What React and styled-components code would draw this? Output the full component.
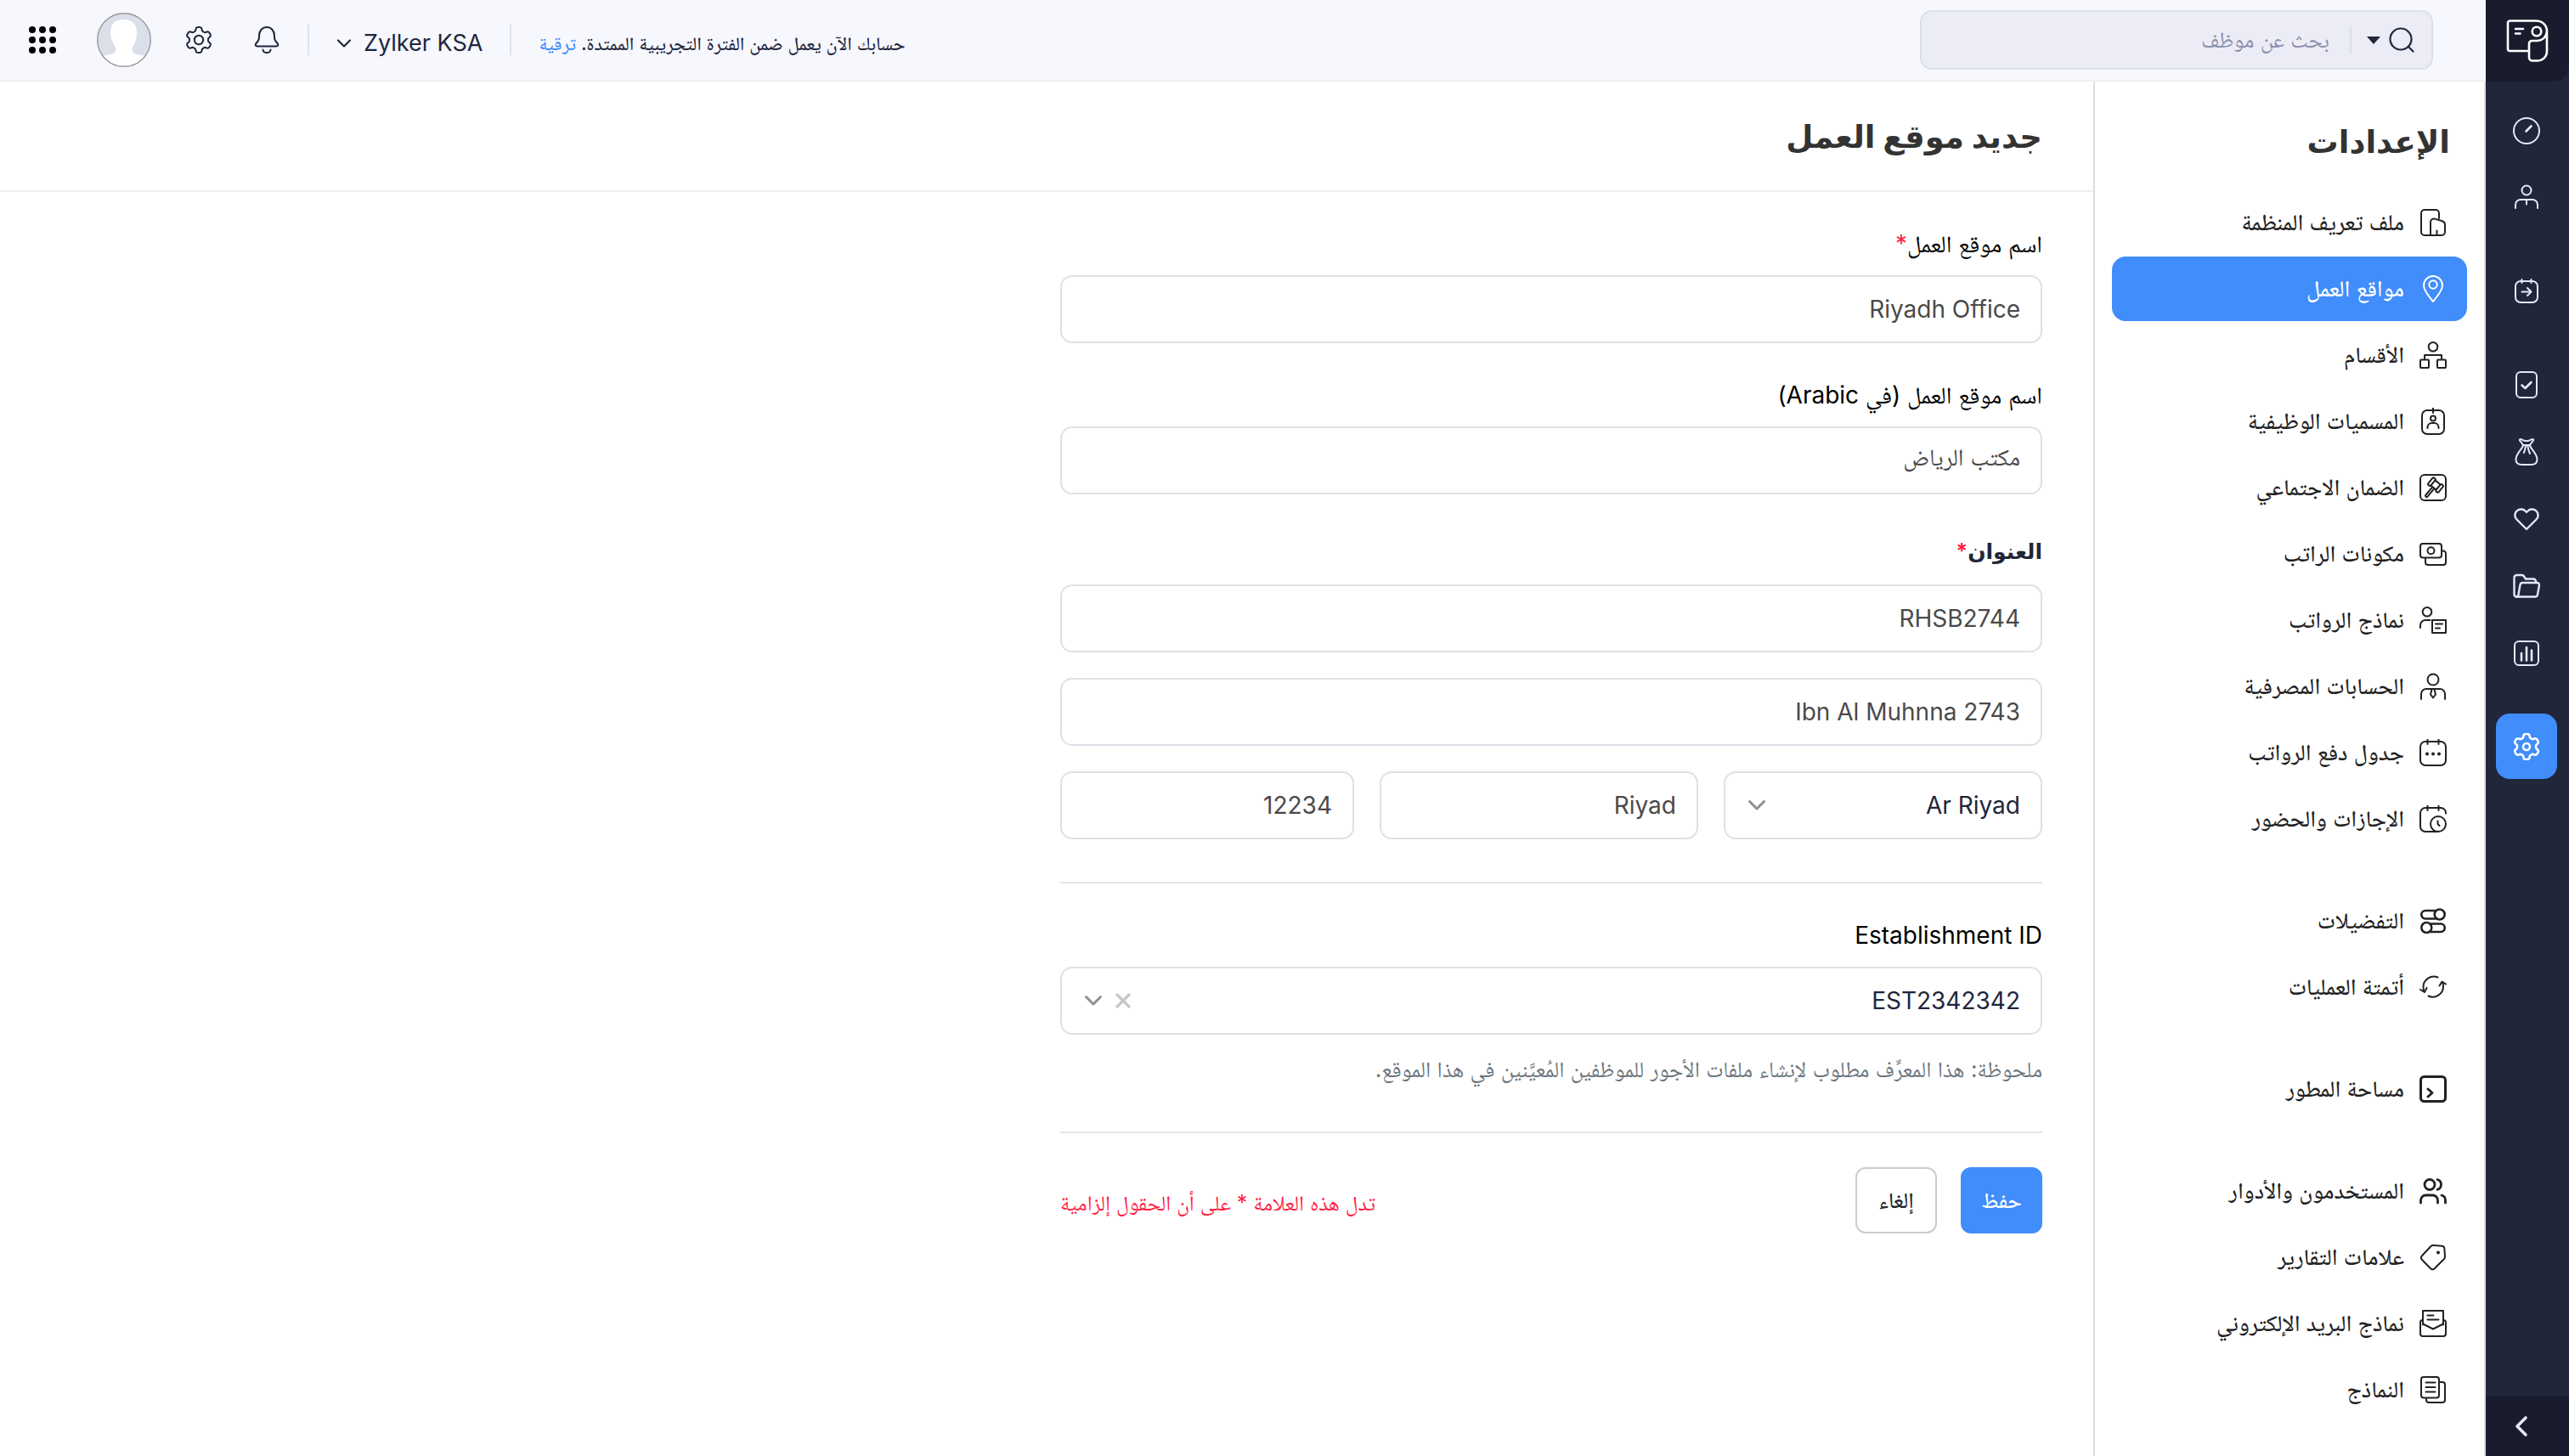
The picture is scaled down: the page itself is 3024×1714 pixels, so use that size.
import React from 'react';
import styled, { createGlobalStyle } from 'styled-components';

const GlobalStyle = createGlobalStyle`
  *, *::before, *::after {
    box-sizing: border-box;
  }

  body {
    margin: 0;
    background: #fff;
    color: #212529;
    font-family: Inter, 'Noto Naskh Arabic', 'DejaVu Sans', sans-serif;
    font-size: 28px;
    line-height: 36px;
  }

  button, input, select {
    font: inherit;
    color: inherit;
    margin: 0;
  }

  a {
    text-decoration: none;
  }
`;

const Page = styled.div`
  display: flex;
  min-height: 100vh;
`;

/* dark icon rail */

const Rail = styled.nav`
  flex: 0 0 98px;
  display: flex;
  flex-direction: column;
  background: #21263a;
`;

const Logo = styled.a`
  display: flex;
  align-items: center;
  justify-content: center;
  height: 96px;
  color: #fff;
  background: #1a1c2e;
  border-bottom-right-radius: 18px;
`;

const RailList = styled.div`
  flex: 1;
  display: flex;
  flex-direction: column;
  align-items: center;
  gap: 2px;
  padding: 19px 2px 0 0;
`;

const RailItem = styled.a`
  display: flex;
  align-items: center;
  justify-content: center;
  width: 72px;
  height: 77px;
  margin-top: ${p => (p.$first ? '31px' : '0')};
  border-radius: 16px;
  color: ${p => (p.$active ? '#fff' : '#e3e9fb')};
  background: ${p => (p.$active ? '#408dfb' : 'transparent')};
`;

const Collapse = styled.button`
  display: flex;
  align-items: center;
  justify-content: center;
  height: 70px;
  padding: 0 14px 0 0;
  border: 0;
  color: #e3e9fb;
  background: #1a1c2e;
`;

/* top bar */

const Shell = styled.div`
  flex: 1;
  min-width: 0;
  display: flex;
  flex-direction: column;
`;

const TopBar = styled.header`
  display: flex;
  align-items: center;
  justify-content: space-between;
  height: 96px;
  padding: 0 62px 0 34px;
  background: #f7f7fe;
  border-bottom: 2px solid #efeff4;
  color: #21263c;
`;

const Search = styled.div`
  display: flex;
  align-items: center;
  width: 604px;
  height: 70px;
  padding: 0 20px;
  border: 2px solid #dcdfea;
  border-radius: 14px;
  background: #ececf7;
`;

const SearchScope = styled.button`
  display: flex;
  align-items: center;
  gap: 10px;
  height: 34px;
  padding: 0 0 0 18px;
  border: 0;
  border-left: 2px solid #dddfe8;
  background: none;
`;

const SearchInput = styled.input`
  flex: 1;
  min-width: 0;
  padding: 0 24px 0 0;
  border: 0;
  outline: 0;
  background: none;
  font-size: 26px;

  &::placeholder {
    color: #8c90ad;
    opacity: 1;
  }
`;

const TopActions = styled.div`
  display: flex;
  align-items: center;
`;

const Trial = styled.p`
  margin: 0;
  padding-top: 8px;
  font-size: 22px;
  font-weight: 500;

  a {
    color: #408dfb;
  }
`;

const Separator = styled.span`
  width: 2px;
  height: 36px;
  margin: 0 32px;
  background: #dfe1ea;
`;

const OrgButton = styled.button`
  display: flex;
  align-items: center;
  gap: 14px;
  padding: 8px 0 0;
  border: 0;
  background: none;
  font-size: 27px;
`;

const IconButton = styled.button`
  display: flex;
  padding: 0;
  border: 0;
  background: none;
  color: ${p => p.$color || 'inherit'};
`;

const IconGroup = styled.div`
  display: flex;
  align-items: center;
  gap: 48px;
`;

const Tools = styled(IconGroup)`
  margin-left: 40px;
`;

/* settings menu */

const Body = styled.div`
  flex: 1;
  display: flex;
`;

const Menu = styled.aside`
  flex: 0 0 462px;
  padding: 41px 20px 24px;
  border: solid #dcdcdc;
  border-width: 0 2px;
`;

const MenuTitle = styled.h2`
  margin: 0 20px 27px;
  color: #333;
  font-family: Inter, 'DejaVu Sans', sans-serif;
  font-size: 37px;
  line-height: 60px;
`;

const MenuGroup = styled.ul`
  display: flex;
  flex-direction: column;
  gap: 2px;
  margin: 0 0 44px;
  padding: 0;
  list-style: none;

  &:last-child {
    margin-bottom: 0;
  }
`;

const MenuLink = styled.a`
  display: flex;
  align-items: center;
  gap: 18px;
  height: 76px;
  padding: 0 24px;
  border-radius: 16px;
  font-size: 27px;
  font-weight: 500;
  color: ${p => (p.$active ? '#fff' : '#222')};
  background: ${p => (p.$active ? '#408dfb' : 'transparent')};
`;

/* form */

const Main = styled.main`
  flex: 1;
  min-width: 0;
`;

const PageHead = styled.div`
  display: flex;
  align-items: center;
  height: 130px;
  padding: 2px 60px 0;
  border-bottom: 2px solid #ededed;
`;

const PageTitle = styled.h1`
  margin: 0;
  color: #333;
  font-family: Inter, 'DejaVu Sans', sans-serif;
  font-size: 37px;
  line-height: 60px;
`;

const Form = styled.form`
  max-width: 1276px;
  padding: 43px 60px;
`;

const Field = styled.div`
  display: flex;
  flex-direction: column;
  gap: 19px;
  margin-bottom: 43px;
`;

const Label = styled.label`
  color: #000;
`;

const Star = styled.span`
  color: #ff1f44;
`;

const Address = styled.fieldset`
  display: flex;
  flex-direction: column;
  gap: 30px;
  margin: 49px 0 0;
  padding: 0;
  border: 0;
`;

const Legend = styled.legend`
  margin-bottom: 21px;
  padding: 0;
  color: #222638;
  font-family: Inter, 'DejaVu Sans', sans-serif;
  font-size: 25px;
  font-weight: 700;
`;

const Input = styled.input`
  width: 100%;
  height: 80px;
  padding: 0 24px;
  border: 2px solid #dee1e7;
  border-radius: 14px;
  outline: 0;
  background: #fff;
  color: #4a4a4a;
`;

const AddressRow = styled.div`
  display: grid;
  grid-template-columns: 375fr 375fr 346fr;
  gap: 30px;
`;

const SelectBox = styled.div`
  position: relative;
`;

const Select = styled.select`
  display: block;
  width: 100%;
  height: 80px;
  padding: 0 24px;
  appearance: none;
  border: 2px solid #dee1e7;
  border-radius: 14px;
  outline: 0;
  background: #fff;
  color: #21263c;
`;

const SelectTools = styled.div`
  position: absolute;
  top: 0;
  bottom: 0;
  left: 28px;
  display: flex;
  align-items: center;
  gap: 14px;
  color: #8f8f8f;
`;

const Rule = styled.hr`
  height: 2px;
  margin: ${p => p.$space};
  border: 0;
  background: #e4e4e7;
`;

const Note = styled.p`
  margin: 4px 0 0;
  color: #6c757d;
  font-size: 26px;
`;

const Footer = styled.div`
  display: flex;
  align-items: center;
  gap: 28px;
`;

const Button = styled.button`
  height: 78px;
  min-width: 96px;
  padding: 0 19px;
  border: 2px solid ${p => (p.$primary ? '#408dfb' : '#ccc')};
  border-radius: 12px;
  background: ${p => (p.$primary ? '#408dfb' : '#fff')};
  color: ${p => (p.$primary ? '#fff' : '#212529')};
  font-size: 26px;
  font-weight: 500;
`;

const Mandatory = styled.p`
  margin: 0 auto 0 0;
  padding-top: 6px;
  color: #ff1f44;
  font-size: 25px;
`;

/* icons */

const gearPath = (cx, cy, outer, inner) => {
  const points = [];
  for (let i = 0; i < 120; i++) {
    const a = (i / 120) * Math.PI * 2;
    const wave = Math.tanh(2.2 * (Math.cos(6 * a) + 0.1)) / Math.tanh(2.42);
    const r = (outer + inner) / 2 + ((outer - inner) / 2) * wave;
    points.push(`${(cx + r * Math.sin(a)).toFixed(2)} ${(cy - r * Math.cos(a)).toFixed(2)}`);
  }
  return `M${points.join('L')}Z`;
};

const Icon = ({ width = 32, height = 32, box = '0 0 32 32', stroke = 2, children }) => (
  <svg width={width} height={height} viewBox={box} fill="none" stroke="currentColor" strokeWidth={stroke} strokeLinecap="round" strokeLinejoin="round" aria-hidden="true">
    {children}
  </svg>
);

const Gear = ({ stroke, hole }) => (
  <Icon stroke={stroke}>
    <path d={gearPath(16, 16, 15, 11)} />
    <circle cx="16" cy="16" r={hole} />
  </Icon>
);

const Chevron = () => (
  <Icon width={22} height={14} box="0 0 22 14" stroke={3}>
    <path d="M2.5 2.5L11 11l8.5-8.5" />
  </Icon>
);

const icons = {
  profile: (
    <Icon>
      <path d="M23 11V5a4 4 0 0 0-4-4H6a4 4 0 0 0-4 4v22a4 4 0 0 0 4 4h20a4 4 0 0 0 4-4V18.500a4.500 4.500 0 0 0-3.200-4.300l-8.600-2.600A4 4 0 0 0 13 15.500V31M20.500 25.500V31" />
    </Icon>
  ),
  pin: (
    <Icon>
      <path d="M16 31C12.500 26.500 5 18.500 5 12a11 11 0 0 1 22 0c0 6.500-7.500 14.500-11 19z" />
      <circle cx="16" cy="11" r="4.700" />
    </Icon>
  ),
  departments: (
    <Icon>
      <circle cx="16" cy="6.300" r="5.300" />
      <path d="M6 21v-5h20v5" />
      <rect x="1" y="21.500" width="10" height="9.500" rx="1" />
      <rect x="21" y="21.500" width="10" height="9.500" rx="1" />
    </Icon>
  ),
  badge: (
    <Icon>
      <rect x="3" y="3" width="26" height="28" rx="6" />
      <path d="M16 0v6M9.500 24v-1a5 5 0 0 1 5-5h3a5 5 0 0 1 5 5v1" />
      <circle cx="16" cy="12.500" r="3" />
    </Icon>
  ),
  gavel: (
    <Icon>
      <rect x="1" y="1" width="30" height="30" rx="5" />
      <g transform="translate(19 13) rotate(40)">
        <rect x="-8" y="-5.500" width="4" height="11" rx="2" />
        <rect x="4" y="-5.500" width="4" height="11" rx="2" />
        <path d="M-4-4h8M-4 4h8M-1.400 4v12.500a1.400 1.400 0 0 0 2.800 0V4" />
      </g>
    </Icon>
  ),
  money: (
    <Icon>
      <rect x="1" y="4" width="25" height="16.500" rx="3" />
      <circle cx="13.500" cy="12.300" r="4" />
      <path d="M26 12.500h2a3 3 0 0 1 3 3V26a3 3 0 0 1-3 3H10a3 3 0 0 1-3-3v-5" />
    </Icon>
  ),
  payslip: (
    <Icon>
      <circle cx="9" cy="6.300" r="5.300" />
      <path d="M1 25v-3a6 6 0 0 1 6-6h5.500M19 20.500h8M19 25.500h5" />
      <rect x="15" y="16" width="16" height="15" />
    </Icon>
  ),
  account: (
    <Icon>
      <circle cx="16" cy="8" r="6.500" />
      <path d="M2 31v-6a6 6 0 0 1 6-6h16a6 6 0 0 1 6 6v6M14.500 19.500l-1.500 6 3 4 3-4-1.500-6" />
    </Icon>
  ),
  schedule: (
    <Icon>
      <rect x="1" y="3" width="30" height="28" rx="6" />
      <path d="M9.500 0v6M22.500 0v6" />
      <g fill="currentColor" stroke="none">
        <circle cx="9" cy="17.500" r="2" />
        <circle cx="16" cy="17.500" r="2" />
        <circle cx="23" cy="17.500" r="2" />
      </g>
    </Icon>
  ),
  leave: (
    <Icon>
      <path d="M31 9.500a6 6 0 0 0-6-6.500H7a6 6 0 0 0-6 6v16a6 6 0 0 0 6 6h15M9.500 0v6M22.500 0v6M21.500 18.500v3.500l2 2" />
      <circle cx="22" cy="22" r="9" />
    </Icon>
  ),
  preferences: (
    <Icon stroke={2.6}>
      <circle cx="23.700" cy="8.500" r="6" />
      <circle cx="8.300" cy="24" r="6" />
      <path d="M19 4H7a4.500 4.500 0 0 0 0 9.500h12M13.500 19.500H25a4.500 4.500 0 0 1 0 9.500H13" />
    </Icon>
  ),
  automation: (
    <Icon>
      <path d="M21.500 4.500C13.500 1.500 4 7 4.500 16.500c0 1.500.300 3 .800 4.500M10.500 26.500c8 3.500 17.500-2 17.500-11.500 0-1.500-.300-3-1-4.500" />
      <path d="M1 19l5 3 2.500-5M31 12.500L26.500 9.500 23.500 14.500" />
    </Icon>
  ),
  developer: (
    <Icon stroke={3}>
      <rect x="1.500" y="1.500" width="29" height="29" rx="4" />
      <path d="M10 16l5 4.500-5 4.500" />
    </Icon>
  ),
  users: (
    <Icon stroke={2.8}>
      <circle cx="12" cy="8.500" r="6" />
      <path d="M1.500 30v-3a6 6 0 0 1 6-6h8a6 6 0 0 1 6 6v3M21 2.700a6 6 0 0 1 0 11.600M26 21.200a6 6 0 0 1 4.500 5.800v3" />
    </Icon>
  ),
  tag: (
    <Icon>
      <path d="M13.200 3.200 3 14.300a3.500 3.500 0 0 0 0 4.700L13 29.300a3.500 3.500 0 0 0 4.800 0l11-11A4.500 4.500 0 0 0 30 15l-.600-9A3.500 3.500 0 0 0 26 2.700L16.500 2a4.500 4.500 0 0 0-3.300 1.200z" />
      <circle cx="22" cy="10.500" r="1" fill="currentColor" />
    </Icon>
  ),
  mail: (
    <Icon>
      <path d="M4 17.500V1h24v16.500M9.500 6.500h7M9.500 11.500h13" />
      <path d="M4 12H3.500A2.500 2.500 0 0 0 1 14.500V28a3 3 0 0 0 3 3h24a3 3 0 0 0 3-3V14.500a2.500 2.500 0 0 0-2.500-2.500H28M4 16.500l12 6 12-6" />
    </Icon>
  ),
  forms: (
    <Icon>
      <rect x="2" y="1" width="21" height="24.500" rx="3" />
      <path d="M23.500 7H27a3 3 0 0 1 3 3v18a3 3 0 0 1-3 3H11a3 3 0 0 1-3-3v-2M7.500 7.500h11M7.500 13h11M7.500 18.500h11" />
    </Icon>
  ),
  dashboard: (
    <Icon>
      <circle cx="16" cy="16" r="15" />
      <path d="M15.500 16.500l6-6" strokeWidth="2.600" />
    </Icon>
  ),
  employee: (
    <Icon>
      <circle cx="16" cy="7" r="5.500" />
      <path d="M3 28v-4a6 6 0 0 1 6-6h14a6 6 0 0 1 6 6v4M16 18v5.500" />
    </Icon>
  ),
  approvals: (
    <Icon>
      <rect x="3" y="4" width="26" height="25" rx="6" />
      <path d="M10.500 2v4M21.500 2v4M10.500 16.500h10.500M17 12l4.500 4.500L17 21" />
    </Icon>
  ),
  check: (
    <Icon>
      <rect x="4" y="1" width="24" height="30" rx="5" />
      <path d="M10.500 16.500l4 3.500 7-7" strokeWidth="2.600" />
    </Icon>
  ),
  bag: (
    <Icon>
      <path d="M12.500 8C9 15 3.500 18 3.500 25c0 4 2.500 6 7 6h11c4.500 0 7-2 7-6 0-7-5.500-10-9-17" />
      <path d="M11.500 8h9M11.500 7L8 2.500c-.500-1 .500-1.800 1.500-1.400 2.500 1.200 4.500 2.100 6.500 2.100s4-.900 6.500-2.100c1-.400 2 .400 1.500 1.400L20.500 7M15 9.500c-.500 3-1 5-2.200 7.500M17.500 9.500c.500 3 1.300 6 2.500 8.500" />
    </Icon>
  ),
  heart: (
    <Icon stroke={2.4}>
      <path d="M16 28L4.500 16.500a7 7 0 0 1-.500-9.500c3-3.300 8-3.300 10.500-.500L16 8l1.500-1.500c2.500-2.800 7.500-2.800 10.500.500a7 7 0 0 1-.500 9.500z" />
    </Icon>
  ),
  folder: (
    <Icon stroke={2.4}>
      <path d="M4 28.500a3 3 0 0 1-2.500-3V6a3 3 0 0 1 3-3h6a3 3 0 0 1 2.200 1L15 7.500h9a3 3 0 0 1 3 3V12" />
      <path d="M4.500 28.500h21.500a3 3 0 0 0 2.900-2.300L31 15a2.500 2.500 0 0 0-2.500-3H11.500a3 3 0 0 0-3 2.500L6.500 26a2.500 2.500 0 0 1-2.500 2.500" />
    </Icon>
  ),
  reports: (
    <Icon>
      <rect x="2" y="2" width="28" height="28" rx="5" />
      <path d="M10 16v8.500M16 9v15.500M22 12.500v12" strokeWidth="2.600" />
    </Icon>
  ),
  settings: <Gear stroke={2.6} hole={4} />,
};

const PayrollLogo = () => (
  <Icon width={50} height={50} box="0 0 50 50" stroke={2.6}>
    <path d="M26 37H4.500A2.500 2.500 0 0 1 2 34.500V4a2.500 2.500 0 0 1 2.500-2.500H35C43 1.500 48 7 48 13.500V37c0 7-5 11.500-11.500 11.500H31a4 4 0 0 1-4-4V28.500a3.500 3.500 0 0 1 3.500-3.500H36c7 0 12-5 12-11.500" />
    <circle cx="36" cy="14" r="5.300" />
    <path d="M11 11h9M11 16.500h5.500" />
  </Icon>
);

const Bell = () => (
  <Icon>
    <path d="M7 11C7 5 11 1 16 1s9 4 9 10v2c0 3.500 1.500 5 3.300 6.800 1.800 1.900 1 3.700-1.300 3.700H5c-2.300 0-3.100-1.800-1.300-3.700C5.500 18 7 16.500 7 13zM11.500 27.500c.500 4.700 8.500 4.700 9 0" />
  </Icon>
);

const Avatar = () => (
  <svg width="64" height="64" viewBox="0 0 64 64" aria-hidden="true">
    <defs>
      <clipPath id="avatar-clip"><circle cx="32" cy="32" r="31" /></clipPath>
    </defs>
    <g clipPath="url(#avatar-clip)">
      <rect width="64" height="64" fill="#dadfea" />
      <path fill="#fff" d="M32 8c9 0 15 5 15 15 0 5-.500 9-2 12-1.500 4-3.500 6-3.500 8 0 4 3 6 8 6.500 5 .500 8 2 10 5V64H4V54c2-3 5-3.500 9-4.500 5-.500 8-2 9-5 .500-3-1-5-2.500-8.500-2-3-3.500-8-3.500-13C16 13 22 8 32 8z" />
    </g>
    <circle cx="32" cy="32" r="31.300" fill="none" stroke="#999" strokeWidth="1.400" />
  </svg>
);

const AppsGrid = () => (
  <svg width="32" height="32" viewBox="0 0 32 32" aria-hidden="true">
    {[4, 16, 28].map(y => [4, 16, 28].map(x => <circle key={`${x}-${y}`} cx={x} cy={y} r="4" />))}
  </svg>
);

const railItems = [
  { icon: 'dashboard', label: 'لوحة المعلومات' },
  { icon: 'employee', label: 'الموظفون' },
  { icon: 'approvals', label: 'تشغيل الرواتب', first: true },
  { icon: 'check', label: 'الموافقات', first: true },
  { icon: 'bag', label: 'القروض' },
  { icon: 'heart', label: 'المزايا' },
  { icon: 'folder', label: 'المستندات' },
  { icon: 'reports', label: 'التقارير' },
  { icon: 'settings', label: 'الإعدادات', first: true, active: true },
];

const menuGroups = [
  [
    { icon: 'profile', label: 'ملف تعريف المنظمة' },
    { icon: 'pin', label: 'مواقع العمل', active: true },
    { icon: 'departments', label: 'الأقسام' },
    { icon: 'badge', label: 'المسميات الوظيفية' },
    { icon: 'gavel', label: 'الضمان الاجتماعي' },
    { icon: 'money', label: 'مكونات الراتب' },
    { icon: 'payslip', label: 'نماذج الرواتب' },
    { icon: 'account', label: 'الحسابات المصرفية' },
    { icon: 'schedule', label: 'جدول دفع الرواتب' },
    { icon: 'leave', label: 'الإجازات والحضور' },
  ],
  [
    { icon: 'preferences', label: 'التفضيلات' },
    { icon: 'automation', label: 'أتمتة العمليات' },
  ],
  [{ icon: 'developer', label: 'مساحة المطور' }],
  [
    { icon: 'users', label: 'المستخدمون والأدوار' },
    { icon: 'tag', label: 'علامات التقارير' },
    { icon: 'mail', label: 'نماذج البريد الإلكتروني' },
    { icon: 'forms', label: 'النماذج' },
  ],
];

const SideRail = () => (
  <Rail>
    <Logo href="#home" aria-label="Payroll"><PayrollLogo /></Logo>
    <RailList>
      {railItems.map(item => (
        <RailItem key={item.icon} href={`#${item.icon}`} aria-label={item.label} $first={item.first} $active={item.active}>
          {icons[item.icon]}
        </RailItem>
      ))}
    </RailList>
    <Collapse type="button" aria-label="طي القائمة">
      <Icon width={16} height={26} box="0 0 16 26" stroke={3.6}>
        <path d="M13 3L3 13l10 10" />
      </Icon>
    </Collapse>
  </Rail>
);

const Header = () => (
  <TopBar>
    <Search>
      <SearchScope type="button" aria-label="نطاق البحث">
        <Icon width={30} height={30} box="0 0 30 30" stroke={2.2}>
          <circle cx="14" cy="14" r="12.500" />
          <path d="M23 23l5.500 5.500" />
        </Icon>
        <svg width="16" height="9" viewBox="0 0 16 9" aria-hidden="true"><path d="M0 0h16L8 9z" fill="currentColor" /></svg>
      </SearchScope>
      <SearchInput type="search" placeholder="بحث عن موظف" aria-label="بحث عن موظف" />
    </Search>
    <TopActions>
      <Trial>حسابك الآن يعمل ضمن الفترة التجريبية الممتدة. <a href="#upgrade">ترقية</a></Trial>
      <Separator />
      <OrgButton type="button">
        Zylker KSA
        <Icon width={18} height={12} box="0 0 18 12" stroke={2.2}><path d="M2 2.500l7 7 7-7" /></Icon>
      </OrgButton>
      <Separator />
      <Tools>
        <IconButton type="button" aria-label="الإشعارات"><Bell /></IconButton>
        <IconButton type="button" aria-label="الإعدادات"><Gear stroke={2} hole={5.2} /></IconButton>
      </Tools>
      <IconGroup>
        <IconButton type="button" aria-label="الحساب"><Avatar /></IconButton>
        <IconButton type="button" aria-label="التطبيقات"><AppsGrid /></IconButton>
      </IconGroup>
    </TopActions>
  </TopBar>
);

const SettingsMenu = () => (
  <Menu>
    <MenuTitle>الإعدادات</MenuTitle>
    {menuGroups.map((group, i) => (
      <MenuGroup key={i}>
        {group.map(item => (
          <li key={item.icon}>
            <MenuLink href={`#${item.icon}`} $active={item.active}>
              {icons[item.icon]}
              {item.label}
            </MenuLink>
          </li>
        ))}
      </MenuGroup>
    ))}
  </Menu>
);

const WorkLocationForm = () => (
  <Form>
    <Field>
      <Label htmlFor="name">اسم موقع العمل<Star>*</Star></Label>
      <Input id="name" defaultValue="Riyadh Office" />
    </Field>
    <Field>
      <Label htmlFor="name-ar">اسم موقع العمل (في Arabic)</Label>
      <Input id="name-ar" defaultValue="مكتب الرياض" />
    </Field>
    <Address>
      <Legend>العنوان<Star>*</Star></Legend>
      <Input aria-label="العنوان 1" defaultValue="RHSB2744" />
      <Input aria-label="العنوان 2" defaultValue="2743 Ibn Al Muhnna" />
      <AddressRow>
        <SelectBox>
          <Select aria-label="المنطقة" defaultValue="Ar Riyad">
            <option>Ar Riyad</option>
          </Select>
          <SelectTools><Chevron /></SelectTools>
        </SelectBox>
        <Input aria-label="المدينة" defaultValue="Riyad" />
        <Input aria-label="الرمز البريدي" defaultValue="12234" />
      </AddressRow>
    </Address>
    <Rule $space="50px 0 43px" />
    <Field>
      <Label htmlFor="establishment">Establishment ID</Label>
      <SelectBox>
        <Select id="establishment" defaultValue="EST2342342">
          <option>EST2342342</option>
        </Select>
        <SelectTools>
          <IconButton type="button" aria-label="مسح" $color="#c8c8c8">
            <Icon width={20} height={20} box="0 0 20 20" stroke={3.4}><path d="M3 3l14 14M17 3L3 17" /></Icon>
          </IconButton>
          <Chevron />
        </SelectTools>
      </SelectBox>
      <Note>ملحوظة: هذا المعرِّف مطلوب لإنشاء ملفات الأجور للموظفين المُعيَّنين في هذا الموقع.</Note>
    </Field>
    <Rule $space="55px 0 40px" />
    <Footer>
      <Button type="button" $primary>حفظ</Button>
      <Button type="button">إلغاء</Button>
      <Mandatory>تدل هذه العلامة * على أن الحقول إلزامية</Mandatory>
    </Footer>
  </Form>
);

const App = () => {
  return (
    <Page dir="rtl" lang="ar">
      <GlobalStyle />
      <SideRail />
      <Shell>
        <Header />
        <Body>
          <SettingsMenu />
          <Main>
            <PageHead>
              <PageTitle>جديد موقع العمل</PageTitle>
            </PageHead>
            <WorkLocationForm />
          </Main>
        </Body>
      </Shell>
    </Page>
  );
};

export default App;
